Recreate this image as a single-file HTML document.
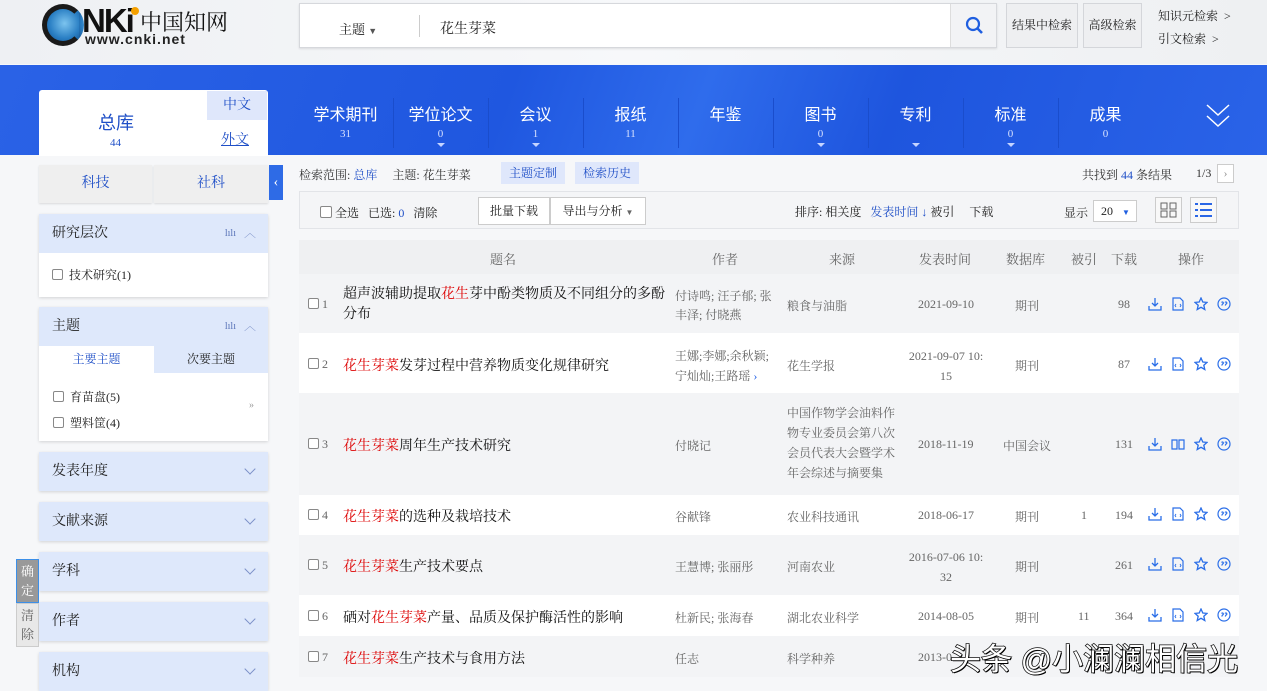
<!DOCTYPE html>
<html><head><meta charset="utf-8">
<style>
*{margin:0;padding:0;box-sizing:border-box}
body{width:1267px;height:690px;overflow:hidden;position:relative;background:#f6f7f9;font-family:"Liberation Serif","Noto Serif CJK SC",serif;font-size:12px;color:#333}
.a{position:absolute}
.hdr{left:0;top:0;width:1267px;height:64px;background:linear-gradient(90deg,#eef0f3,#f7f8fa 50%,#eef0f2)}
.band{left:0;top:65px;width:1267px;height:90px;background:linear-gradient(110deg,#2a62e6 0%,#1f57e0 40%,#2f6cec 55%,#1e55de 70%,#2a63e8 100%)}
.nav{top:101px;width:95px;text-align:center;color:#fff;font-size:16px;font-family:"Liberation Sans","Noto Sans CJK SC",sans-serif}
.nav b{display:block;font-weight:normal;font-size:11px;color:#d8e2ff;font-family:"Liberation Serif",serif;margin-top:3px}
.nav i{display:block;width:0;height:0;margin:3px auto 0;border:4px solid transparent;border-top:4px solid #c5d4ff;border-bottom:0}
.sep{top:98px;width:1px;height:50px;background:#1a4dcc}
.sec{left:39px;width:229px;background:#dee8fb;box-shadow:0 1px 3px rgba(0,0,0,.15);font-size:14px;color:#222;padding-left:13px;line-height:39px;height:39px}
.sec .ch{position:absolute;right:14px;top:13px;width:8px;height:8px;border-right:1.5px solid #7c90c8;border-bottom:1.5px solid #7c90c8;transform:rotate(45deg)}
.cb{display:inline-block;width:11px;height:11px;border:1px solid #888;border-radius:2px;background:#fff;vertical-align:-1px;margin-right:6px}
.row{left:299px;width:940px}
.g{background:#f3f4f6}
.t{font-size:14px;color:#111;font-family:"Liberation Serif","Noto Serif CJK SC",serif}
.r{color:#d00}
.c{color:#666}
.ops{display:flex;gap:9px}
.ops svg{width:14px;height:14px}
</style></head><body>
<div class="a hdr"></div>
<!-- logo -->
<div class="a" style="left:42px;top:4px;width:42px;height:42px;border-radius:50%;border:5px solid #1a1a1a;border-right-color:transparent;background:radial-gradient(circle at 55% 45%,#7cc4ef,#2a7fc4 60%,#13508f)"></div>
<div class="a" style="left:82px;top:2px;font:bold 33px 'Liberation Sans',sans-serif;color:#111;letter-spacing:-2px">NKi</div>
<div class="a" style="left:131px;top:7px;width:8px;height:8px;border-radius:50%;background:#f5a100"></div>
<div class="a" style="left:140px;top:6px;font-size:22px;color:#111;font-family:'Noto Serif CJK SC',serif">中国知网</div>
<div class="a" style="left:85px;top:31px;font:bold 14px 'Liberation Sans',sans-serif;color:#222;letter-spacing:1px">www.cnki.net</div>
<!-- search -->
<div class="a" style="left:299px;top:3px;width:698px;height:45px;background:#fff;border:1px solid #d6d8dc;box-shadow:0 1px 2px rgba(0,0,0,.1)"></div>
<div class="a" style="left:339px;top:19px;font-size:13px;color:#222">主题 <span style="font-size:9px;color:#555">▼</span></div>
<div class="a" style="left:419px;top:15px;width:1px;height:22px;background:#ccc"></div>
<div class="a" style="left:440px;top:18px;font-size:14px;color:#222">花生芽菜</div>
<div class="a" style="left:950px;top:4px;width:46px;height:43px;background:#f2f3f5;border-left:1px solid #ddd"></div>
<svg class="a" style="left:965px;top:16px" width="20" height="20" viewBox="0 0 20 20"><circle cx="8" cy="8" r="6" fill="none" stroke="#1f5fe0" stroke-width="2.2"/><path d="M12.5 12.5L17 17" stroke="#1f5fe0" stroke-width="2.6"/></svg>
<div class="a" style="left:1006px;top:3px;width:72px;height:45px;background:#eeeff1;border:1px solid #d4d6da;text-align:center;line-height:43px;font-size:12px;color:#222">结果中检索</div>
<div class="a" style="left:1083px;top:3px;width:59px;height:45px;background:#eeeff1;border:1px solid #d4d6da;text-align:center;line-height:43px;font-size:12px;color:#222">高级检索</div>
<div class="a" style="left:1158px;top:7px;font-size:12px;color:#222">知识元检索 &nbsp;&gt;</div>
<div class="a" style="left:1158px;top:30px;font-size:12px;color:#222">引文检索 &nbsp;&gt;</div>
<!-- band -->
<div class="a band"></div>
<div class="a nav" style="left:298px">学术期刊<b>31</b></div>
<div class="a sep" style="left:393px"></div>
<div class="a nav" style="left:393px">学位论文<b>0</b><i></i></div>
<div class="a sep" style="left:488px"></div>
<div class="a nav" style="left:488px">会议<b>1</b><i></i></div>
<div class="a sep" style="left:583px"></div>
<div class="a nav" style="left:583px">报纸<b>11</b></div>
<div class="a sep" style="left:678px"></div>
<div class="a nav" style="left:678px">年鉴</div>
<div class="a sep" style="left:773px"></div>
<div class="a nav" style="left:773px">图书<b>0</b><i></i></div>
<div class="a sep" style="left:868px"></div>
<div class="a nav" style="left:868px">专利<b>&nbsp;</b><i></i></div>
<div class="a sep" style="left:963px"></div>
<div class="a nav" style="left:963px">标准<b>0</b><i></i></div>
<div class="a sep" style="left:1058px"></div>
<div class="a nav" style="left:1058px">成果<b>0</b></div>
<svg class="a" style="left:1206px;top:103px" width="24" height="26" viewBox="0 0 24 26"><path d="M1 2L12 12L23 2M1 13L12 23L23 13" fill="none" stroke="#fff" stroke-width="1.5"/></svg>
<!-- left total card -->
<div class="a" style="left:39px;top:90px;width:229px;height:66px;background:#fff;border-radius:3px 3px 0 0"></div>
<div class="a" style="left:98px;top:109px;font-size:18px;color:#1f4fc7;font-family:'Liberation Sans','Noto Sans CJK SC',sans-serif">总库</div>
<div class="a" style="left:110px;top:137px;font-size:11px;color:#1f4fc7">44</div>
<div class="a" style="left:207px;top:91px;width:60px;height:29px;background:#dfe7fb;text-align:center;line-height:29px;font-size:14px;color:#1f4fc7">中文</div>
<div class="a" style="left:221px;top:129px;font-size:14px;color:#1f4fc7;text-decoration:underline">外文</div>
<div class="a" style="left:39px;top:165px;width:113px;height:38px;background:#efefef;text-align:center;line-height:38px;font-size:14px;color:#1f4fc7;box-shadow:0 1px 2px rgba(0,0,0,.12)">科技</div>
<div class="a" style="left:154px;top:165px;width:114px;height:38px;background:#efefef;text-align:center;line-height:38px;font-size:14px;color:#1f4fc7;box-shadow:0 1px 2px rgba(0,0,0,.12)">社科</div>
<div class="a" style="left:269px;top:165px;width:14px;height:35px;background:#2e6be6;color:#fff;font-size:14px;line-height:35px;text-align:center">‹</div>
<!-- 研究层次 -->
<div class="a" style="left:39px;top:214px;width:229px;height:83px;background:#fff;box-shadow:0 1px 3px rgba(0,0,0,.15)"></div>
<div class="a sec" style="top:214px;box-shadow:none">研究层次<span style="position:absolute;right:32px;font-size:10px;color:#5a74b8">lılı</span><span style="position:absolute;right:12px;color:#7c90c8;font-size:12px">︿</span></div>
<div class="a" style="left:52px;top:266px;font-size:12px;color:#222"><span class="cb"></span>技术研究(1)</div>
<!-- 主题 -->
<div class="a" style="left:39px;top:307px;width:229px;height:134px;background:#fff;box-shadow:0 1px 3px rgba(0,0,0,.15)"></div>
<div class="a sec" style="top:307px;box-shadow:none">主题<span style="position:absolute;right:32px;font-size:10px;color:#5a74b8">lılı</span><span style="position:absolute;right:12px;color:#7c90c8;font-size:12px">︿</span></div>
<div class="a" style="left:154px;top:345px;width:114px;height:28px;background:#dee8fb;text-align:center;line-height:28px;font-size:12px;color:#222">次要主题</div>
<div class="a" style="left:39px;top:345px;width:115px;height:28px;text-align:center;line-height:28px;font-size:12px;color:#1f4fc7">主要主题</div>
<div class="a" style="left:53px;top:388px;font-size:12px;color:#222"><span class="cb"></span>育苗盘(5)</div>
<div class="a" style="left:53px;top:414px;font-size:12px;color:#222"><span class="cb"></span>塑料筐(4)</div>
<div class="a" style="left:249px;top:400px;font-size:10px;color:#999">»</div>
<div class="a sec" style="top:452px">发表年度<span class="ch"></span></div>
<div class="a sec" style="top:502px">文献来源<span class="ch"></span></div>
<div class="a sec" style="top:552px">学科<span class="ch"></span></div>
<div class="a sec" style="top:602px">作者<span class="ch"></span></div>
<div class="a sec" style="top:652px">机构<span class="ch"></span></div>
<div class="a" style="left:16px;top:559px;width:23px;height:44px;background:#999;border:1px solid #3c8fe8;color:#fff;font-size:13px;text-align:center;line-height:19px;padding-top:2px">确<br>定</div>
<div class="a" style="left:16px;top:603px;width:23px;height:44px;background:#e8e8e8;border:1px solid #ccc;color:#666;font-size:13px;text-align:center;line-height:19px;padding-top:2px">清<br>除</div>
<!-- breadcrumb -->
<div class="a" style="left:299px;top:166px;font-size:12px;color:#333">检索范围: <span style="color:#1f4fc7">总库</span> &nbsp; &nbsp; 主题: 花生芽菜</div>
<div class="a" style="left:501px;top:162px;width:64px;height:22px;background:#dfe7fb;color:#1f4fc7;text-align:center;line-height:22px">主题定制</div>
<div class="a" style="left:575px;top:162px;width:64px;height:22px;background:#dfe7fb;color:#1f4fc7;text-align:center;line-height:22px">检索历史</div>
<div class="a" style="left:1082px;top:166px;color:#333">共找到 <span style="color:#1f4fc7">44</span> 条结果</div>
<div class="a" style="left:1196px;top:166px;color:#333">1/3</div>
<div class="a" style="left:1217px;top:164px;width:17px;height:19px;border:1px solid #ccc;background:#fff;text-align:center;line-height:17px;color:#999">›</div>
<!-- toolbar -->
<div class="a" style="left:299px;top:191px;width:940px;height:38px;background:#f4f5f7;border:1px solid #e2e4e8"></div>
<div class="a" style="left:320px;top:204px;color:#222"><span class="cb" style="width:12px;height:12px;margin-right:3px"></span>全选 &nbsp; 已选: <span style="color:#1f4fc7">0</span> &nbsp; 清除</div>
<div class="a" style="left:478px;top:197px;width:72px;height:28px;background:#fff;border:1px solid #ccc;text-align:center;line-height:26px;color:#222">批量下载</div>
<div class="a" style="left:550px;top:197px;width:96px;height:28px;background:#fff;border:1px solid #ccc;text-align:center;line-height:26px;color:#222">导出与分析 <span style="font-size:8px;color:#666">▼</span></div>
<div class="a" style="left:795px;top:203px;color:#222">排序: 相关度 &nbsp; <span style="color:#1f4fc7">发表时间 ↓</span> 被引 &nbsp; &nbsp; 下载</div>
<div class="a" style="left:1064px;top:204px;color:#222">显示</div>
<div class="a" style="left:1093px;top:200px;width:44px;height:22px;background:#fff;border:1px solid #ccc;line-height:20px;padding-left:7px;color:#222">20 <span style="font-size:8px;color:#1f5fe0;margin-left:6px">▼</span></div>
<div class="a" style="left:1155px;top:197px;width:27px;height:26px;border:1px solid #ccc;background:#f8f8f8"></div>
<svg class="a" style="left:1160px;top:202px" width="17" height="16"><rect x="1" y="1" width="6" height="6" fill="none" stroke="#666"/><rect x="10" y="1" width="6" height="6" fill="none" stroke="#666"/><rect x="1" y="9" width="6" height="6" fill="none" stroke="#666"/><rect x="10" y="9" width="6" height="6" fill="none" stroke="#666"/></svg>
<div class="a" style="left:1190px;top:197px;width:27px;height:26px;border:1px solid #ccc;background:#f8f8f8"></div>
<svg class="a" style="left:1195px;top:202px" width="17" height="16"><g fill="#2a66e6"><rect x="0" y="1" width="3" height="2"/><rect x="5" y="1" width="12" height="2"/><rect x="0" y="7" width="3" height="2"/><rect x="5" y="7" width="12" height="2"/><rect x="0" y="13" width="3" height="2"/><rect x="5" y="13" width="12" height="2"/></g></svg>
<!-- table header -->
<div class="a row" style="top:240px;height:34px;background:#eff0f2"></div>
<div class="a" style="top:249px;left:490px;font-size:13px;color:#666">题名</div>
<div class="a" style="top:249px;left:712px;font-size:13px;color:#666">作者</div>
<div class="a" style="top:249px;left:829px;font-size:13px;color:#666">来源</div>
<div class="a" style="top:249px;left:919px;font-size:13px;color:#666">发表时间</div>
<div class="a" style="top:249px;left:1006px;font-size:13px;color:#666">数据库</div>
<div class="a" style="top:249px;left:1071px;font-size:13px;color:#666">被引</div>
<div class="a" style="top:249px;left:1111px;font-size:13px;color:#666">下载</div>
<div class="a" style="top:249px;left:1178px;font-size:13px;color:#666">操作</div>
<!-- rows bg -->
<div class="a row g" style="top:274px;height:59px"></div>
<div class="a row" style="top:333px;height:60px;background:#fff"></div>
<div class="a row g" style="top:393px;height:102px"></div>
<div class="a row" style="top:495px;height:40px;background:#fff"></div>
<div class="a row g" style="top:535px;height:60px"></div>
<div class="a row" style="top:595px;height:41px;background:#fff"></div>
<div class="a row g" style="top:636px;height:41px"></div>

<!-- row contents -->
<div class="a c" style="left:308px;top:297px"><span class="cb"></span></div><div class="a c" style="left:322px;top:297px">1</div>
<div class="a t" style="left:343px;top:285px;width:325px;line-height:20px">超声波辅助提取<span class="r">花生</span>芽中酚类物质及不同组分的多酚分布</div>
<div class="a c" style="left:675px;top:287px;width:105px;line-height:19px">付诗鸣; 汪子郁; 张丰泽; 付晓燕</div>
<div class="a c" style="left:787px;top:297px">粮食与油脂</div>
<div class="a c" style="left:918px;top:297px">2021-09-10</div>
<div class="a c" style="left:1015px;top:297px">期刊</div>
<div class="a c" style="left:1118px;top:297px">98</div>

<div class="a c" style="left:308px;top:357px"><span class="cb"></span></div><div class="a c" style="left:322px;top:357px">2</div>
<div class="a t" style="left:343px;top:355px"><span class="r">花生芽菜</span>发芽过程中营养物质变化规律研究</div>
<div class="a c" style="left:675px;top:346px;width:100px;line-height:20px">王娜;李娜;余秋颖;宁灿灿;王路瑶 <span style="color:#2a66e6">›</span></div>
<div class="a c" style="left:787px;top:357px">花生学报</div>
<div class="a c" style="left:900px;top:346px;width:92px;line-height:20px;text-align:center">2021-09-07 10:<br>15</div>
<div class="a c" style="left:1015px;top:357px">期刊</div>
<div class="a c" style="left:1118px;top:357px">87</div>

<div class="a c" style="left:308px;top:437px"><span class="cb"></span></div><div class="a c" style="left:322px;top:437px">3</div>
<div class="a t" style="left:343px;top:435px"><span class="r">花生芽菜</span>周年生产技术研究</div>
<div class="a c" style="left:675px;top:437px">付晓记</div>
<div class="a c" style="left:787px;top:403px;width:112px;line-height:20px">中国作物学会油料作物专业委员会第八次会员代表大会暨学术年会综述与摘要集</div>
<div class="a c" style="left:918px;top:437px">2018-11-19</div>
<div class="a c" style="left:1003px;top:437px">中国会议</div>
<div class="a c" style="left:1115px;top:437px">131</div>

<div class="a c" style="left:308px;top:508px"><span class="cb"></span></div><div class="a c" style="left:322px;top:508px">4</div>
<div class="a t" style="left:343px;top:506px"><span class="r">花生芽菜</span>的选种及栽培技术</div>
<div class="a c" style="left:675px;top:508px">谷献锋</div>
<div class="a c" style="left:787px;top:508px">农业科技通讯</div>
<div class="a c" style="left:918px;top:508px">2018-06-17</div>
<div class="a c" style="left:1015px;top:508px">期刊</div>
<div class="a c" style="left:1081px;top:508px">1</div>
<div class="a c" style="left:1115px;top:508px">194</div>

<div class="a c" style="left:308px;top:558px"><span class="cb"></span></div><div class="a c" style="left:322px;top:558px">5</div>
<div class="a t" style="left:343px;top:556px"><span class="r">花生芽菜</span>生产技术要点</div>
<div class="a c" style="left:675px;top:558px">王慧博; 张丽彤</div>
<div class="a c" style="left:787px;top:558px">河南农业</div>
<div class="a c" style="left:900px;top:547px;width:92px;line-height:20px;text-align:center">2016-07-06 10:<br>32</div>
<div class="a c" style="left:1015px;top:558px">期刊</div>
<div class="a c" style="left:1115px;top:558px">261</div>

<div class="a c" style="left:308px;top:609px"><span class="cb"></span></div><div class="a c" style="left:322px;top:609px">6</div>
<div class="a t" style="left:343px;top:607px">硒对<span class="r">花生芽菜</span>产量、品质及保护酶活性的影响</div>
<div class="a c" style="left:675px;top:609px">杜新民; 张海春</div>
<div class="a c" style="left:787px;top:609px">湖北农业科学</div>
<div class="a c" style="left:918px;top:609px">2014-08-05</div>
<div class="a c" style="left:1015px;top:609px">期刊</div>
<div class="a c" style="left:1078px;top:609px">11</div>
<div class="a c" style="left:1115px;top:609px">364</div>

<div class="a c" style="left:308px;top:650px"><span class="cb"></span></div><div class="a c" style="left:322px;top:650px">7</div>
<div class="a t" style="left:343px;top:648px"><span class="r">花生芽菜</span>生产技术与食用方法</div>
<div class="a c" style="left:675px;top:650px">任志</div>
<div class="a c" style="left:787px;top:650px">科学种养</div>
<div class="a c" style="left:918px;top:650px">2013-0</div>

<!-- ops icons -->
<svg width="0" height="0" style="position:absolute"><defs>
<g id="dl" fill="none" stroke="#2a6ee8" stroke-width="1.3"><path d="M7 1v8M4 6l3 3 3-3M1 9v4h12V9"/></g>
<g id="doc" fill="none" stroke="#2a6ee8" stroke-width="1.2"><path d="M2 1h7l3 3v9H2z"/><path d="M5 7l-1 1.5 1 1.5M9 7l1 1.5-1 1.5" stroke-width=".9"/></g>
<g id="st" fill="none" stroke="#2a6ee8" stroke-width="1.3"><path d="M7 1l1.8 4 4.2.4-3.2 2.8 1 4.3L7 10.3 3.2 12.5l1-4.3L1 5.4l4.2-.4z"/></g>
<g id="q" fill="none" stroke="#2a6ee8" stroke-width="1.2"><circle cx="7" cy="7" r="6"/><path d="M4.5 5.5a1 1 0 1 1 1 1.5l-.8 1.5M8 5.5a1 1 0 1 1 1 1.5l-.8 1.5"/></g>
</defs></svg>
<div class="a ops" style="left:1148px;top:297px"><svg><use href="#dl"/></svg><svg><use href="#doc"/></svg><svg><use href="#st"/></svg><svg><use href="#q"/></svg></div>
<div class="a ops" style="left:1148px;top:357px"><svg><use href="#dl"/></svg><svg><use href="#doc"/></svg><svg><use href="#st"/></svg><svg><use href="#q"/></svg></div>
<div class="a ops" style="left:1148px;top:437px"><svg><use href="#dl"/></svg><svg viewBox="0 0 14 14"><path d="M1 3h5v9H1zM8 3h5v9H8z" fill="none" stroke="#2a6ee8" stroke-width="1.2"/></svg><svg><use href="#st"/></svg><svg><use href="#q"/></svg></div>
<div class="a ops" style="left:1148px;top:507px"><svg><use href="#dl"/></svg><svg><use href="#doc"/></svg><svg><use href="#st"/></svg><svg><use href="#q"/></svg></div>
<div class="a ops" style="left:1148px;top:557px"><svg><use href="#dl"/></svg><svg><use href="#doc"/></svg><svg><use href="#st"/></svg><svg><use href="#q"/></svg></div>
<div class="a ops" style="left:1148px;top:608px"><svg><use href="#dl"/></svg><svg><use href="#doc"/></svg><svg><use href="#st"/></svg><svg><use href="#q"/></svg></div>
<!-- watermark -->
<div class="a" style="left:950px;top:634px;font-size:31px;color:#fff;font-family:'Liberation Sans','Noto Sans CJK SC',sans-serif;-webkit-text-stroke:1.5px #111;paint-order:stroke fill;text-shadow:1px 1px 0 #000">头条 @小澜澜相信光</div>
</body></html>
